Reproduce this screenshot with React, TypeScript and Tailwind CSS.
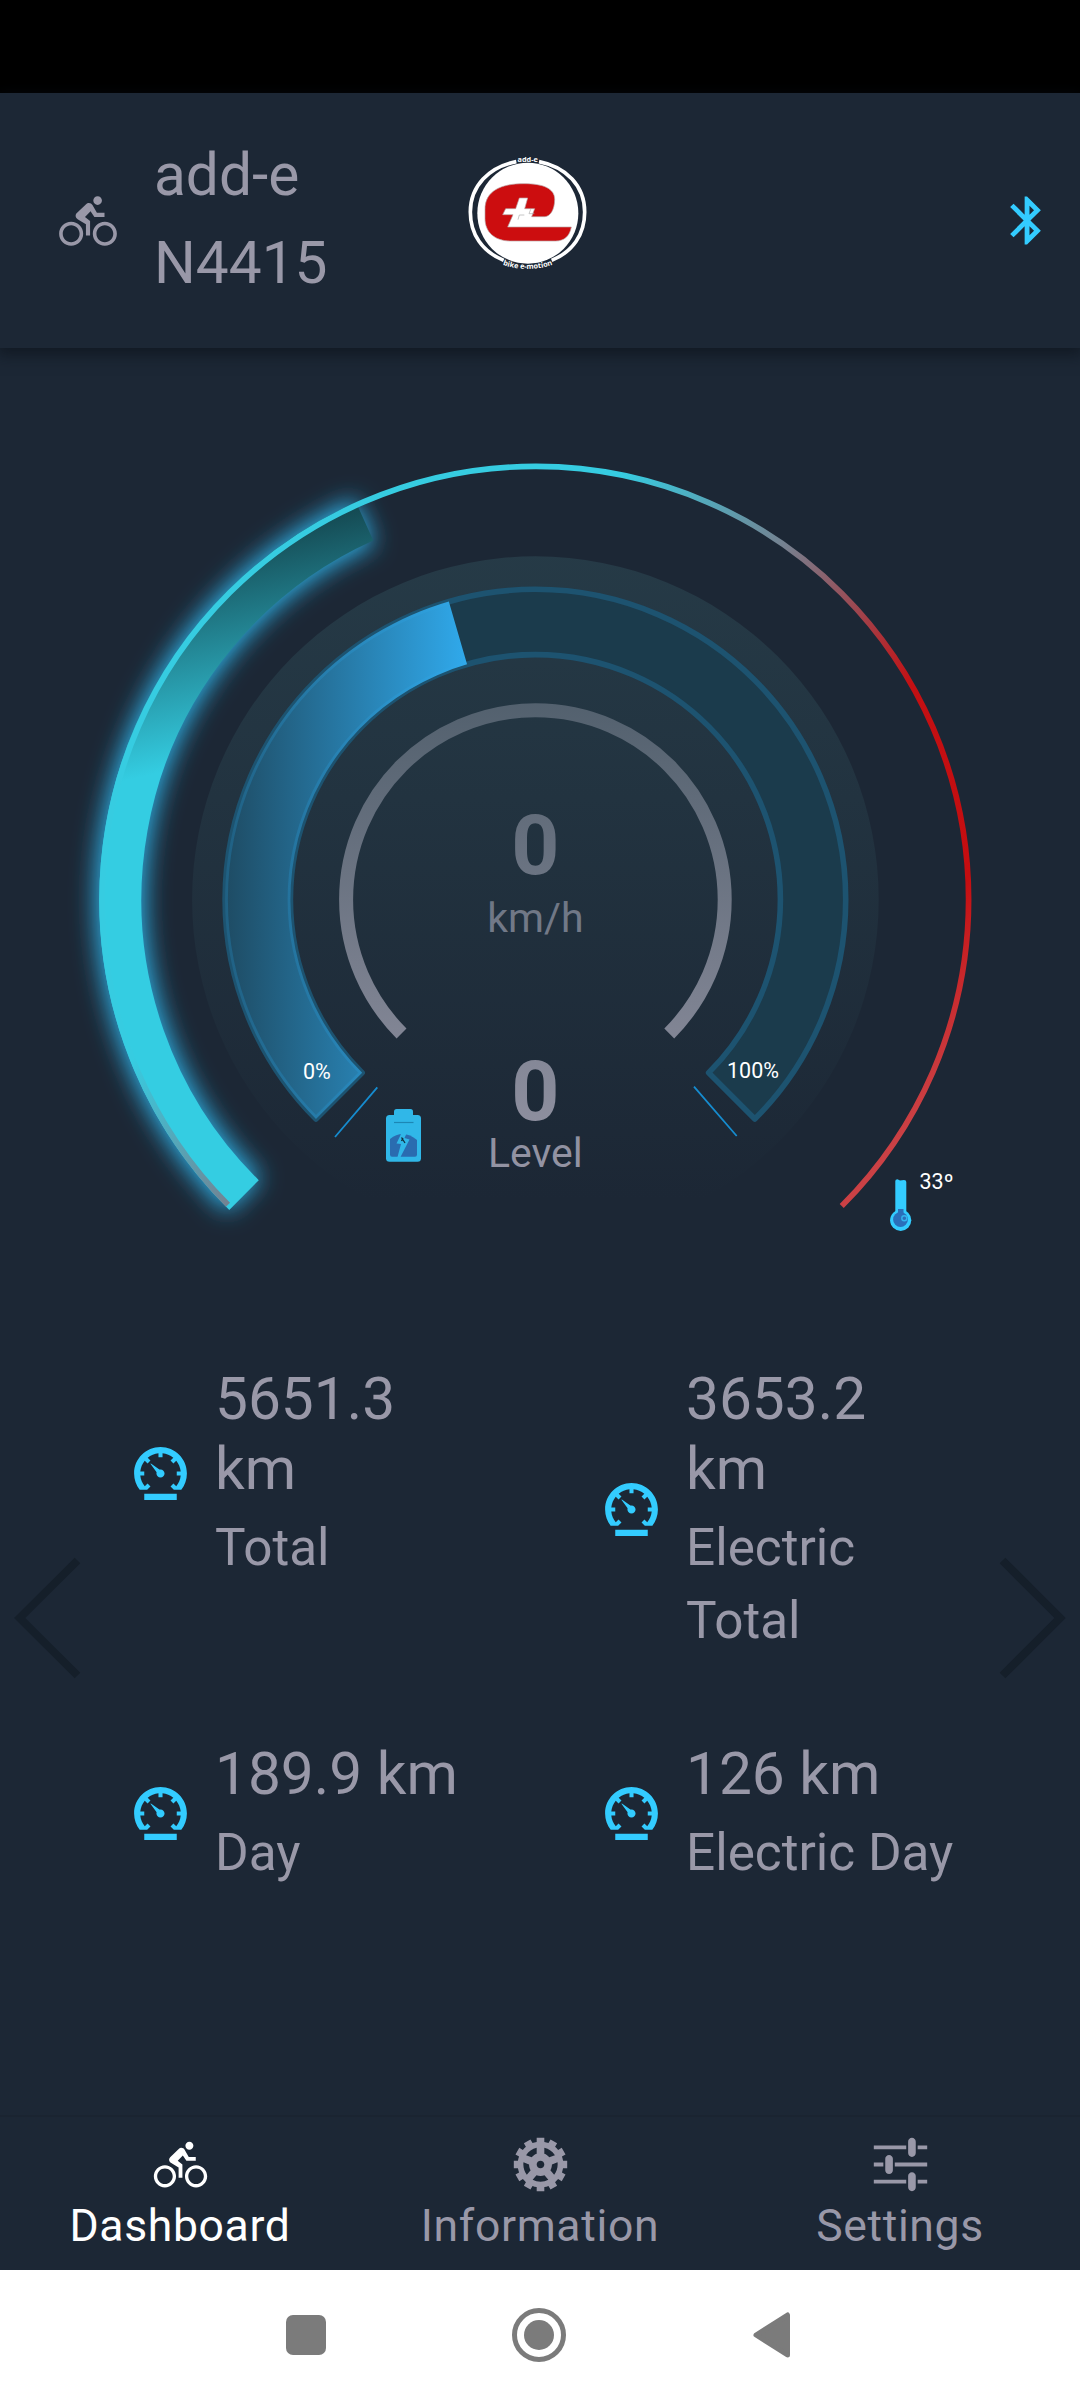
import type { IconType } from "react-icons";
import {
  IoMdBicycle,
  IoMdBluetooth,
  IoMdCog,
  IoMdOptions,
  IoMdSpeedometer,
} from "react-icons/io";

const CX = 535.4;
const CY = 899.6;

// angle in degrees, clockwise from 12 o'clock
const point = (r: number, deg: number) => {
  const rad = (deg * Math.PI) / 180;
  return `${(CX + r * Math.sin(rad)).toFixed(2)} ${(CY - r * Math.cos(rad)).toFixed(2)}`;
};

const arc = (r: number, from: number, to: number) =>
  `M${point(r, from)}A${r} ${r} 0 ${to - from > 180 ? 1 : 0} 1 ${point(r, to)}`;

const band = (outer: number, inner: number, from: number, to: number) => {
  const large = to - from > 180 ? 1 : 0;
  return `${arc(outer, from, to)}L${point(inner, to)}A${inner} ${inner} 0 ${large} 0 ${point(inner, from)}Z`;
};

const Logo = () => (
  <svg viewBox="0 0 540 480" className="mb-5 h-40 w-[180px]">
    <g fill="none" stroke="#fff" strokeWidth="11">
      <path d="M232 92C150 108 94 165 94 243C94 310 130 362 194 388" />
      <path d="M300 92C382 108 437 165 437 243C437 310 402 362 338 388" />
    </g>
    <circle cx="266.5" cy="246.5" r="151.5" fill="#fff" />
    <path
      d="M255 158C312 158 347 172 347 205C347 236 334 256 318 257H278L287 233H257L266 201H241L230 233H200L191 251H222L206 288H397C392 316 375 330 350 330H215C165 330 138 302 138 262V235C138 180 185 158 255 158Z"
      fill="#cc0d0f"
      stroke="#b9a3a5"
      strokeWidth="2"
    />
    <path
      d="M237 266L241 252H256M275 235L270 248H286"
      fill="none"
      stroke="#aaa"
      strokeWidth="2"
    />
    <path id="motto" d="M190 401Q266 427 342 401" fill="none" />
    <text
      x="266"
      y="92"
      textAnchor="middle"
      fill="#fff"
      className="font-['Open_Sans',sans-serif] text-[22px] font-bold"
    >
      add-e
    </text>
    <text
      fill="#fff"
      textAnchor="middle"
      className="font-['Open_Sans',sans-serif] text-[22px] font-bold"
    >
      <textPath href="#motto" startOffset="50%">
        bike e-motion
      </textPath>
    </text>
  </svg>
);

const Header = () => (
  <header className="relative flex h-[255px] items-center bg-[#1c2735] shadow-[0_4px_14px_3px_rgba(10,15,22,0.55)]">
    <IoMdBicycle className="ml-[55px] size-[66px] shrink-0 text-[#9998a8]" />
    <h1 className="mb-[3px] ml-[33px] w-[285px] text-[58.6px] leading-[88px]">
      add-e
      <br />
      N4415
    </h1>
    <Logo />
    <IoMdBluetooth className="mr-[27px] ml-auto size-[55px] text-[#33ccff]" />
  </header>
);

const Battery = () => (
  <g>
    <rect x="394" y="1109" width="19" height="10" rx="2.5" fill="#30b7e8" />
    <rect x="386" y="1115" width="35" height="46.7" rx="3.5" fill="#30b7e8" />
    <path d="M394 1122.5H413.5" stroke="#1c87b5" strokeWidth="1.2" />
    <path
      d="M390 1139Q396 1134 403 1134Q410 1134 417 1140V1154.5Q417 1156.7 415 1156.7H392Q390 1156.7 390 1154.5Z"
      fill="#2a6cb0"
    />
    <path
      d="M401.5 1133L396.5 1143.5L401 1144L397.5 1157H400.5L409.5 1139.5L404.5 1138L410 1126Z"
      fill="#30b7e8"
    />
    <path d="M401.5 1137.5L405 1143M401.5 1141L403 1138" stroke="#12303f" strokeWidth="1.3" />
  </g>
);

const Thermometer = () => (
  <g>
    <path
      d="M895.3 1181Q895.3 1179.3 897.5 1179.3L900 1180.5L904 1180Q906.3 1180 906.3 1182V1212H895.3Z"
      fill="#33ccff"
    />
    <circle cx="900.7" cy="1220.3" r="10.6" fill="#33ccff" />
    <path d="M898 1209H903.5V1215H898Z" fill="#2a6fba" />
    <circle cx="900.5" cy="1219.5" r="7.4" fill="#2a6fba" />
    <circle cx="904.3" cy="1218.3" r="2.5" fill="none" stroke="#33b4ee" strokeWidth="1.4" />
  </g>
);

const Gauge = () => (
  <svg viewBox="0 348 1080 952" className="h-[952px] w-[1080px] shrink-0">
    <defs>
      <linearGradient id="scale" gradientUnits="userSpaceOnUse" x1="376" y1="767" x2="868" y2="1177">
        <stop offset="0" stopColor="#36cce1" />
        <stop offset="0.27" stopColor="#76808f" />
        <stop offset="0.56" stopColor="#c31013" />
        <stop offset="0.82" stopColor="#c50d10" />
        <stop offset="1" stopColor="#cb4145" />
      </linearGradient>
      <linearGradient id="temperature" gradientUnits="userSpaceOnUse" x1="150" y1="775" x2="102" y2="569.5">
        <stop offset="0" stopColor="#34cde2" />
        <stop offset="1" stopColor="#154b54" />
      </linearGradient>
      <linearGradient id="charge" gradientUnits="userSpaceOnUse" x1="225" y1="0" x2="466" y2="0">
        <stop offset="0" stopColor="#30a9eb" stopOpacity="0.15" />
        <stop offset="1" stopColor="#30a9eb" />
      </linearGradient>
      <linearGradient id="glass" gradientUnits="userSpaceOnUse" x1="0" y1="556" x2="0" y2="1200">
        <stop offset="0" stopColor="#283f4b" stopOpacity="0.8" />
        <stop offset="1" stopColor="#283f4b" stopOpacity="0" />
      </linearGradient>
      <filter id="glow" filterUnits="userSpaceOnUse" x="0" y="400" width="600" height="900">
        <feGaussianBlur stdDeviation="12" />
      </filter>
    </defs>

    {/* outer ring: controller temperature */}
    <path
      d={arc(415, -135.4, -24.3)}
      fill="none"
      stroke="#2fb4ea"
      strokeWidth="49"
      filter="url(#glow)"
    />
    <path d={arc(415, -135.4, -24.3)} fill="none" stroke="url(#temperature)" strokeWidth="42" />
    <path d={arc(433.2, -134.8, 135)} fill="none" stroke="url(#scale)" strokeWidth="5.7" />

    {/* speed and assist level */}
    <path d={arc(189.3, -135, 135)} fill="none" stroke="#9897a7" strokeWidth="14" />
    <g fill="#9897a7" textAnchor="middle">
      <text x={CX} y="874" className="text-[84px] font-bold">
        0
      </text>
      <text x={CX} y="932" className="text-[41px]">
        km/h
      </text>
      <text x={CX} y="1119.5" className="text-[84px] font-bold">
        0
      </text>
      <text x={CX} y="1166.5" className="text-[41px]">
        Level
      </text>
    </g>
    <circle cx={CX} cy={CY} r="343.3" fill="url(#glass)" />

    {/* battery charge */}
    <path
      d={band(310.3, 245, -135, 135)}
      fill="#1b3b4c"
      stroke="#1d5370"
      strokeWidth="5.6"
      strokeLinejoin="round"
    />
    <path d={band(310.3, 245, -135, -16.2)} fill="url(#charge)" />
    <path
      d="M377.3 1087.3L335 1137M694 1086.7L736.7 1136"
      stroke="#168ccf"
      strokeWidth="1.8"
    />
    <Battery />
    <Thermometer />
    <g fill="#fff" className="text-[21.5px]">
      <text x="303" y="1078.5">
        0%
      </text>
      <text x="727" y="1078">
        100%
      </text>
      <text x="919.5" y="1189">
        33º
      </text>
    </g>
  </svg>
);

const stats = [
  { value: "5651.3 km", label: "Total", width: "w-[190px]" },
  { value: "3653.2 km", label: "Electric Total", width: "w-[190px]" },
  { value: "189.9 km", label: "Day", width: "w-[300px]" },
  { value: "126 km", label: "Electric Day", width: "w-[300px]" },
];

const Stats = () => (
  <section className="relative flex h-[815px] flex-col pt-16">
    <div className="ml-[127.5px] grid grid-cols-[471px_1fr] items-start gap-y-[82px]">
      {stats.map(({ value, label, width }) => (
        <div key={label} className="flex items-center">
          <IoMdSpeedometer className="mb-0.5 size-[65px] shrink-0 text-[#33ccff]" />
          <div className={`ml-[22.5px] ${width}`}>
            <p className="text-[58.6px] leading-[70px]">{value}</p>
            <p className="mt-[7px] text-[51.3px] leading-[73px]">{label}</p>
          </div>
        </div>
      ))}
    </div>
    {/* slide arrows lie over the stats */}
    <svg
      viewBox="0 0 1080 130"
      className="absolute top-[253px] left-0 h-[130px] w-[1080px]"
      fill="none"
      stroke="#151f2a"
      strokeWidth="8"
    >
      <path d="M77.5 7.5L19.7 65L77.5 122.5" />
      <path d="M1002.5 7.5L1060 65L1002.5 122.5" />
    </svg>
  </section>
);

const tabs: { label: string; Icon: IconType; active?: boolean }[] = [
  { label: "Dashboard", Icon: IoMdBicycle, active: true },
  { label: "Information", Icon: IoMdCog },
  { label: "Settings", Icon: IoMdOptions },
];

const TabBar = () => (
  <nav className="grid h-[155px] grid-cols-3 border-t-2 border-[#1a2431]">
    {tabs.map(({ label, Icon, active }) => (
      <div
        key={label}
        className={`flex flex-col items-center pt-[17px] ${active ? "text-white" : "text-[#9998a8]"}`}
      >
        <Icon className="size-[61px]" />
        <span className="mt-[5px] text-[44.5px] leading-[52px] tracking-[0.65px]">{label}</span>
      </div>
    ))}
  </nav>
);

const SystemBar = () => (
  <div className="flex h-[130px] justify-center bg-white">
    <svg viewBox="0 0 520 130" className="h-[130px] w-[520px]" fill="#7b7b7b">
      <rect x="6" y="45" width="40" height="40" rx="7" />
      <circle cx="259" cy="65" r="24.5" fill="none" stroke="#7b7b7b" strokeWidth="5" />
      <circle cx="259" cy="65" r="15" />
      <path
        d="M476 65L507.5 45V85Z"
        stroke="#7b7b7b"
        strokeWidth="5"
        strokeLinejoin="round"
      />
    </svg>
  </div>
);

const App = () => (
  <div className="flex h-[2400px] w-[1080px] flex-col overflow-hidden bg-[#1c2735] font-[Roboto,sans-serif] text-[#9998a8]">
    <div className="h-[93px] shrink-0 bg-black" />
    <Header />
    <Gauge />
    <Stats />
    <TabBar />
    <SystemBar />
  </div>
);

export default App;
